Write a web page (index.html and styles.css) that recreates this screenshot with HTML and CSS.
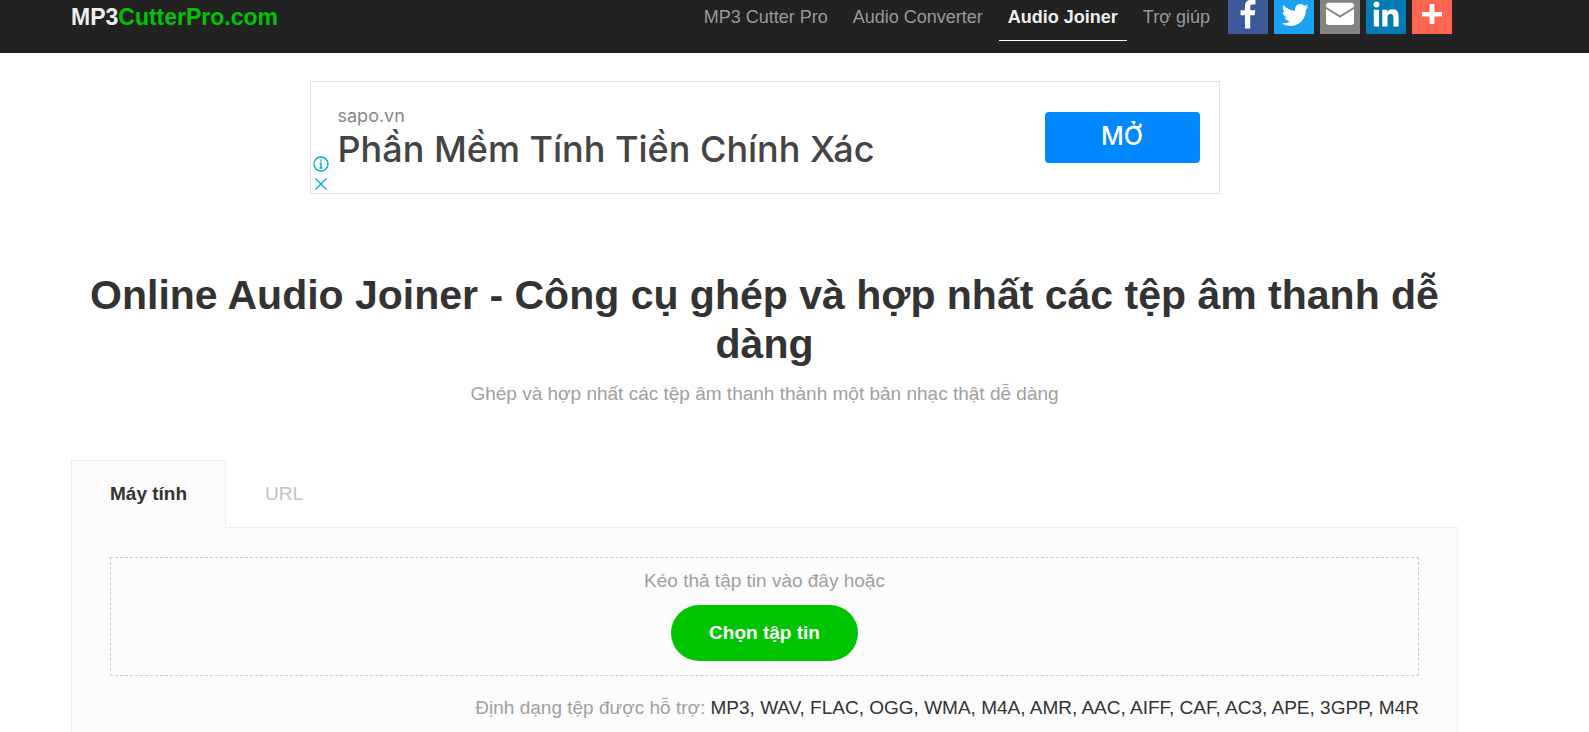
FILE: index.html
```html
<!DOCTYPE html>
<html lang="vi">
<head>
<meta charset="utf-8">
<title>Online Audio Joiner</title>
<link rel="stylesheet" href="styles.css">
</head>
<body>
<header class="topbar">
  <div class="shell topbar-row">
    <a class="brand" href="#">MP3<span class="brand-accent">CutterPro.com</span></a>
    <div class="topbar-end">
      <nav class="nav">
        <a class="nav-link" href="#">MP3 Cutter Pro</a>
        <a class="nav-link" href="#">Audio Converter</a>
        <a class="nav-link nav-active" href="#" aria-current="page">Audio Joiner</a>
        <a class="nav-link" href="#">Trợ giúp</a>
      </nav>
      <div class="share">
        <a class="share-link facebook" href="#" aria-label="Facebook"><svg viewBox="0 0 32 32"><path d="M17.78 27.5V17.008h3.522l.527-4.09h-4.05v-2.61c0-1.182.33-1.99 2.023-1.99h2.166V4.66c-.375-.05-1.66-.16-3.155-.16-3.123 0-5.26 1.905-5.26 5.405v3.016h-3.53v4.09h3.53V27.5h4.223z"/></svg></a>
        <a class="share-link twitter" href="#" aria-label="Twitter"><svg viewBox="0 0 32 32"><path transform="translate(2.5 2.4) scale(.9)" d="M28 8.557a9.913 9.913 0 0 1-2.828.775 4.93 4.93 0 0 0 2.166-2.725 9.738 9.738 0 0 1-3.13 1.194 4.92 4.92 0 0 0-3.593-1.55 4.924 4.924 0 0 0-4.794 6.049c-4.09-.21-7.72-2.17-10.15-5.15a4.942 4.942 0 0 0-.665 2.477c0 1.71.87 3.214 2.19 4.1a4.968 4.968 0 0 1-2.23-.616v.06c0 2.39 1.7 4.38 3.952 4.83-.414.115-.85.174-1.297.174-.318 0-.626-.03-.928-.086a4.935 4.935 0 0 0 4.6 3.42 9.893 9.893 0 0 1-6.114 2.107c-.398 0-.79-.023-1.175-.068a13.953 13.953 0 0 0 7.55 2.213c9.056 0 14.01-7.507 14.01-14.013 0-.213-.005-.426-.015-.637.96-.695 1.795-1.56 2.455-2.55z"/></svg></a>
        <a class="share-link email" href="#" aria-label="Email"><svg viewBox="0 0 32 32"><rect x="4.8" y="7" width="22.4" height="17.8" rx="2.2"/><path class="fold" d="M4.400 10.800 16 18l11.600-7.200"/></svg></a>
        <a class="share-link linkedin" href="#" aria-label="LinkedIn"><svg viewBox="0 0 32 32"><path d="M6.227 12.61h4.19v13.48h-4.19V12.61zm2.095-6.7a2.43 2.43 0 0 1 0 4.86c-1.344 0-2.428-1.09-2.428-2.43s1.084-2.43 2.428-2.43m4.72 6.7h4.02v1.84h.058c.56-1.058 1.927-2.176 3.965-2.176 4.238 0 5.02 2.792 5.02 6.42v7.395h-4.183v-6.56c0-1.564-.03-3.574-2.178-3.574-2.18 0-2.514 1.7-2.514 3.46v6.668h-4.187V12.61z"/></svg></a>
        <a class="share-link more" href="#" aria-label="Share"><svg viewBox="0 0 32 32"><path d="M14.100 8h3.800v6.300H24v3.600h-6.100V24h-3.800v-6.100H8v-3.600h6.100z"/></svg></a>
      </div>
    </div>
  </div>
</header>

<main class="shell main">
  <aside class="ad">
    <div class="ad-controls">
      <button class="ad-control" aria-label="Info"><svg viewBox="0 0 16 16"><circle cx="8" cy="8" r="7"/><path d="M8 6.600V12.400M8 3.600v1.800M6.600 7.200H8M6.400 12h3.200"/></svg></button>
      <button class="ad-control" aria-label="Close"><svg viewBox="0 0 16 16"><path d="M2.500 2.500l11 11M13.500 2.500l-11 11"/></svg></button>
    </div>
    <div class="ad-text">
      <span class="ad-site">sapo.vn</span>
      <span class="ad-title">Phần Mềm Tính Tiền Chính Xác</span>
    </div>
    <button class="ad-open">MỞ</button>
  </aside>

  <h1 class="title">Online Audio Joiner - Công cụ ghép và hợp nhất các tệp âm thanh dễ dàng</h1>
  <p class="subtitle">Ghép và hợp nhất các tệp âm thanh thành một bản nhạc thật dễ dàng</p>

  <div class="tabs" role="tablist">
    <button class="tab tab-active" role="tab" aria-selected="true">Máy tính</button>
    <button class="tab" role="tab" aria-selected="false">URL</button>
  </div>
  <section class="panel">
    <div class="dropzone">
      <p class="hint">Kéo thả tập tin vào đây hoặc</p>
      <button class="choose">Chọn tập tin</button>
    </div>
    <p class="formats">Định dạng tệp được hỗ trợ: <span class="formats-list">MP3, WAV, FLAC, OGG, WMA, M4A, AMR, AAC, AIFF, CAF, AC3, APE, 3GPP, M4R</span></p>
  </section>
</main>
</body>
</html>
```
FILE: styles.css
```css
* { box-sizing: border-box; }

body {
  margin: 0;
  min-height: 100vh;
  display: flex;
  flex-direction: column;
  background: #fff;
  color: #333;
  font: 19px/24px "Liberation Sans", Arial, sans-serif;
}

h1, p { margin: 0; }
a { text-decoration: none; }
button {
  margin: 0;
  padding: 0;
  border: 0;
  background: none;
  font: inherit;
  cursor: pointer;
}
svg { display: block; width: 100%; height: 100%; }

.shell { padding: 0 131px 0 71px; }

/* top bar */
.topbar { background: #222; height: 53px; }
.topbar-row {
  display: flex;
  justify-content: space-between;
  align-items: flex-start;
}
.brand {
  padding-top: 5px;
  color: #eee;
  font-size: 23px;
  font-weight: bold;
}
.brand-accent { color: #00c400; }
.topbar-end { display: flex; gap: 9px; padding-right: 6px; }
.nav { display: flex; gap: 7px; }
.nav-link {
  height: 41px;
  padding: 5px 9px 0;
  border-bottom: 1px solid transparent;
  color: #999;
  font-size: 18px;
}
.nav-active {
  color: #eee;
  font-weight: bold;
  border-bottom-color: #fff;
}
.share { display: flex; gap: 6px; margin-top: -6px; }
.share-link { width: 40px; height: 40px; fill: #fff; }
.facebook { background: #3b5998; }
.twitter { background: #1da1f2; }
.email { background: #848484; }
.linkedin { background: #007bb5; }
.more { background: #ff6550; }
.fold { fill: none; stroke: #848484; stroke-width: 1.6; }

/* main column */
.main {
  flex: 1;
  display: flex;
  flex-direction: column;
}

.ad {
  align-self: center;
  display: flex;
  width: 910px;
  max-width: 100%;
  height: 113px;
  margin-top: 28px;
  border: 1px solid #e2e2e2;
}
.ad-controls {
  align-self: flex-end;
  display: flex;
  flex-direction: column;
  gap: 4px;
  padding: 0 9px 1px 2px;
}
.ad-control {
  width: 16px;
  height: 16px;
  fill: none;
  stroke: #00aecd;
  stroke-width: 1.4;
}
.ad-text {
  flex: 1;
  display: flex;
  flex-direction: column;
  padding-top: 22px;
  font-family: Inter, "Noto Sans", sans-serif;
}
.ad-site { color: #888; font-size: 18px; line-height: 24px; }
.ad-title { color: #444; font-size: 36px; font-weight: 500; line-height: 42px; }
.ad-open {
  align-self: flex-start;
  width: 155px;
  height: 51px;
  margin: 30px 19px 0 0;
  padding-bottom: 3px;
  border-radius: 4px;
  background: #08f;
  color: #fff;
  font: 500 25px/32px Inter, "Noto Sans", sans-serif;
}

.title {
  margin-top: 77px;
  font-size: 41px;
  line-height: 49px;
  text-align: center;
}
.subtitle {
  margin-top: 13px;
  color: #a0a0a0;
  text-align: center;
}

.tabs { display: flex; margin-top: 54px; }
.tab {
  height: 67px;
  padding: 0 38px;
  border: 1px solid transparent;
  border-bottom: 0;
  color: #c4c4c4;
}
.tab-active {
  z-index: 1;
  height: 68px;
  margin-bottom: -1px;
  padding-bottom: 2px;
  border-color: #eee;
  background: #fcfcfc;
  color: #333;
  font-weight: bold;
}
.panel {
  flex: 1;
  padding: 29px 38px 0;
  border: 1px solid #eee;
  border-bottom: 0;
  background: #fcfcfc;
}
.dropzone {
  display: flex;
  flex-direction: column;
  align-items: center;
  gap: 12px;
  padding: 11px 0 14px;
  border: 1px dashed #ccc;
}
.hint { color: #a0a0a0; }
.choose {
  height: 56px;
  padding: 0 38px;
  border-radius: 28px;
  background: #00c400;
  color: #fff;
  font-weight: bold;
}
.formats {
  margin-top: 20px;
  color: #a0a0a0;
  text-align: right;
}
.formats-list { color: #333; }
```
